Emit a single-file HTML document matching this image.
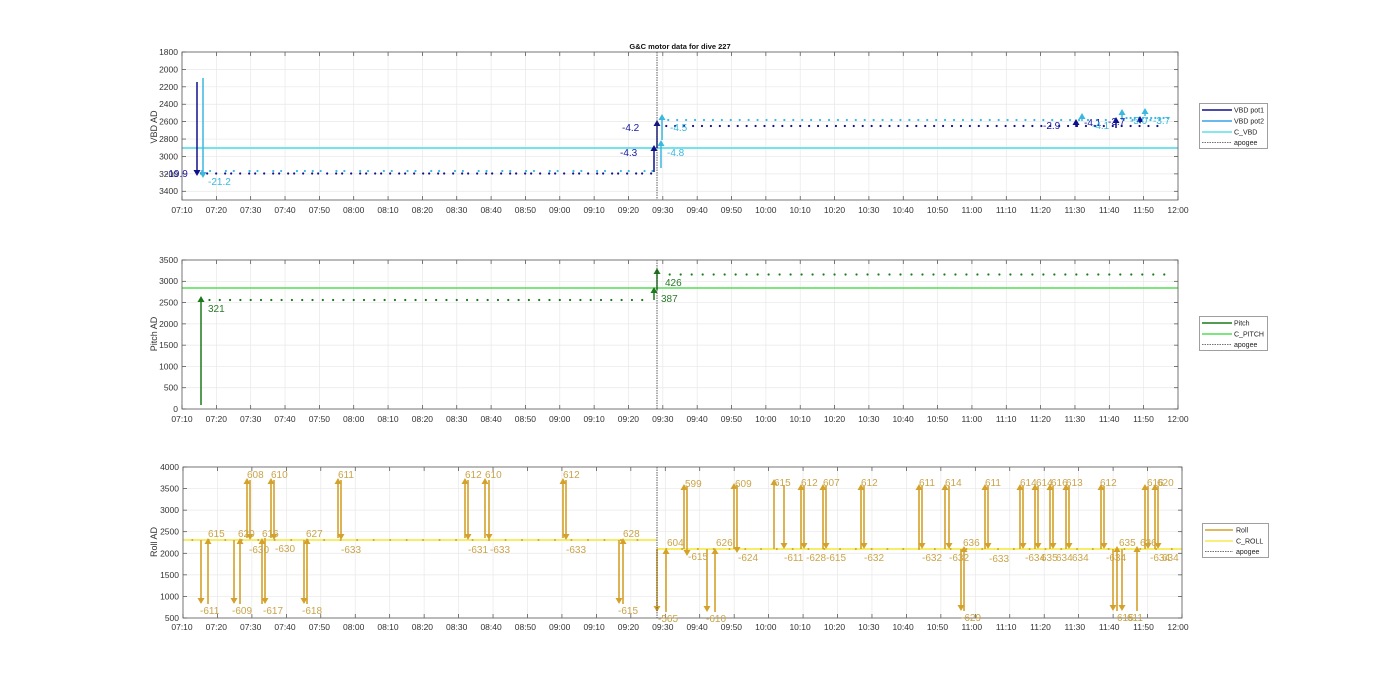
<!DOCTYPE html>
<html><head><meta charset="utf-8"><style>
html,body{margin:0;padding:0;background:#fff;width:1400px;height:693px;overflow:hidden}
svg{display:block;font-family:"Liberation Sans",sans-serif}
.tk{font-size:8.5px;fill:#333}
.lg{font-size:7px;fill:#222}
.vb{font-size:10px}
.rl{font-size:10px;fill:#C9A44A}
</style></head><body>
<svg id="s" width="1400" height="693" viewBox="0 0 1400 693" xmlns="http://www.w3.org/2000/svg">
<g id="dyn"></g>
<text x="680" y="49" text-anchor="middle" style="font-size:7.5px;font-weight:bold;fill:#111">G&amp;C motor data for dive 227</text>
<text transform="translate(157,127) rotate(-90)" text-anchor="middle" class="tk" style="font-size:9px">VBD AD</text>
<text transform="translate(157,334) rotate(-90)" text-anchor="middle" class="tk" style="font-size:9px">Pitch AD</text>
<text transform="translate(157,542) rotate(-90)" text-anchor="middle" class="tk" style="font-size:9px">Roll AD</text>
<g class="tk" text-anchor="end">
<text x="178" y="55">1800</text><text x="178" y="72.4">2000</text><text x="178" y="89.8">2200</text><text x="178" y="107.2">2400</text><text x="178" y="124.6">2600</text><text x="178" y="142">2800</text><text x="178" y="159.4">3000</text><text x="178" y="176.8">3200</text><text x="178" y="194.2">3400</text>
<text x="178" y="412">0</text><text x="178" y="390.7">500</text><text x="178" y="369.4">1000</text><text x="178" y="348.1">1500</text><text x="178" y="326.8">2000</text><text x="178" y="305.5">2500</text><text x="178" y="284.2">3000</text><text x="178" y="263">3500</text>
<text x="179" y="621">500</text><text x="179" y="599.4">1000</text><text x="179" y="577.9">1500</text><text x="179" y="556.3">2000</text><text x="179" y="534.7">2500</text><text x="179" y="513.2">3000</text><text x="179" y="491.6">3500</text><text x="179" y="470">4000</text>
</g>
<g class="tk" text-anchor="middle">
<g transform="translate(0,213)"><text x="182">07:10</text><text x="216.3">07:20</text><text x="250.7">07:30</text><text x="285">07:40</text><text x="319.4">07:50</text><text x="353.7">08:00</text><text x="388">08:10</text><text x="422.4">08:20</text><text x="456.7">08:30</text><text x="491.1">08:40</text><text x="525.4">08:50</text><text x="559.7">09:00</text><text x="594.1">09:10</text><text x="628.4">09:20</text><text x="662.8">09:30</text><text x="697.1">09:40</text><text x="731.4">09:50</text><text x="765.8">10:00</text><text x="800.1">10:10</text><text x="834.5">10:20</text><text x="868.8">10:30</text><text x="903.1">10:40</text><text x="937.5">10:50</text><text x="971.8">11:00</text><text x="1006.2">11:10</text><text x="1040.5">11:20</text><text x="1074.8">11:30</text><text x="1109.2">11:40</text><text x="1143.5">11:50</text><text x="1178">12:00</text></g>
<g transform="translate(0,422)"><text x="182">07:10</text><text x="216.3">07:20</text><text x="250.7">07:30</text><text x="285">07:40</text><text x="319.4">07:50</text><text x="353.7">08:00</text><text x="388">08:10</text><text x="422.4">08:20</text><text x="456.7">08:30</text><text x="491.1">08:40</text><text x="525.4">08:50</text><text x="559.7">09:00</text><text x="594.1">09:10</text><text x="628.4">09:20</text><text x="662.8">09:30</text><text x="697.1">09:40</text><text x="731.4">09:50</text><text x="765.8">10:00</text><text x="800.1">10:10</text><text x="834.5">10:20</text><text x="868.8">10:30</text><text x="903.1">10:40</text><text x="937.5">10:50</text><text x="971.8">11:00</text><text x="1006.2">11:10</text><text x="1040.5">11:20</text><text x="1074.8">11:30</text><text x="1109.2">11:40</text><text x="1143.5">11:50</text><text x="1178">12:00</text></g>
<g transform="translate(0,630)"><text x="182">07:10</text><text x="216.3">07:20</text><text x="250.7">07:30</text><text x="285">07:40</text><text x="319.4">07:50</text><text x="353.7">08:00</text><text x="388">08:10</text><text x="422.4">08:20</text><text x="456.7">08:30</text><text x="491.1">08:40</text><text x="525.4">08:50</text><text x="559.7">09:00</text><text x="594.1">09:10</text><text x="628.4">09:20</text><text x="662.8">09:30</text><text x="697.1">09:40</text><text x="731.4">09:50</text><text x="765.8">10:00</text><text x="800.1">10:10</text><text x="834.5">10:20</text><text x="868.8">10:30</text><text x="903.1">10:40</text><text x="937.5">10:50</text><text x="971.8">11:00</text><text x="1006.2">11:10</text><text x="1040.5">11:20</text><text x="1074.8">11:30</text><text x="1109.2">11:40</text><text x="1143.5">11:50</text><text x="1178">12:00</text></g>
</g>
<g class="vb">
<text x="165" y="177" fill="#1a1aa0">-19.9</text>
<text x="208" y="185" fill="#3ab8e0">-21.2</text>
<text x="622" y="131" fill="#1a1aa0">-4.2</text>
<text x="620" y="156" fill="#1a1aa0">-4.3</text>
<text x="670" y="131" fill="#3ab8e0">-4.5</text>
<text x="667" y="156" fill="#3ab8e0">-4.8</text>
<text x="1043" y="129" fill="#1a1aa0">-2.9</text>
<text x="1084" y="126" fill="#1a1aa0">-4.1</text>
<text x="1092" y="129" fill="#3ab8e0">-4.1</text>
<text x="1108" y="125" fill="#1a1aa0">-3.7</text>
<text x="1130" y="124" fill="#3ab8e0">-5.0</text>
<text x="1153" y="124" fill="#3ab8e0">-3.7</text>
</g>
<g style="font-size:10px;fill:#2a7a2a">
<text x="208" y="312">321</text><text x="665" y="286">426</text><text x="661" y="302">387</text>
</g>
<g class="rl">
<text x="200" y="614">-611</text><text x="208" y="537">615</text><text x="232" y="614">-609</text><text x="238" y="537">620</text><text x="247" y="478">608</text><text x="249" y="553">-630</text>
<text x="262" y="537">616</text><text x="263" y="614">-617</text><text x="271" y="478">610</text><text x="275" y="552">-630</text><text x="302" y="614">-618</text><text x="306" y="537">627</text>
<text x="338" y="478">611</text><text x="341" y="553">-633</text><text x="465" y="478">612</text><text x="485" y="478">610</text><text x="468" y="553">-631</text><text x="490" y="553">-633</text>
<text x="563" y="478">612</text><text x="566" y="553">-633</text><text x="618" y="614">-615</text><text x="623" y="537">628</text><text x="658" y="622">-565</text><text x="667" y="546">604</text>
<text x="685" y="487">599</text><text x="688" y="560">-615</text><text x="706" y="622">-610</text><text x="716" y="546">626</text><text x="735" y="487">609</text><text x="738" y="561">-624</text>
<text x="774" y="486">615</text><text x="784" y="561">-611</text><text x="801" y="486">612</text><text x="806" y="561">-628</text><text x="823" y="486">607</text><text x="826" y="561">-615</text>
<text x="861" y="486">612</text><text x="864" y="561">-632</text><text x="919" y="486">611</text><text x="922" y="561">-632</text><text x="945" y="486">614</text><text x="949" y="561">-632</text>
<text x="963" y="546">636</text><text x="961" y="621">-629</text><text x="985" y="486">611</text><text x="989" y="562">-633</text>
<text x="1020" y="486">614</text><text x="1036" y="486">614</text><text x="1051" y="486">616</text><text x="1066" y="486">613</text><text x="1025" y="561">-634</text><text x="1041" y="561">635</text><text x="1056" y="561">634</text><text x="1072" y="561">634</text>
<text x="1100" y="486">612</text><text x="1106" y="561">-634</text><text x="1119" y="546">635</text><text x="1140" y="546">636</text><text x="1117" y="621">615</text><text x="1127" y="621">611</text>
<text x="1147" y="486">616</text><text x="1157" y="486">620</text><text x="1150" y="561">-634</text><text x="1162" y="561">634</text>
</g>
<g>
<rect x="1199.5" y="103.5" width="68" height="45" fill="#fff" stroke="#888" stroke-width="0.8"/>
<line x1="1202" y1="110" x2="1232" y2="110" stroke="#10108c" stroke-width="1.5"/><text class="lg" x="1234" y="112.5">VBD pot1</text>
<line x1="1202" y1="121" x2="1232" y2="121" stroke="#3aa0e8" stroke-width="1.5"/><text class="lg" x="1234" y="123.5">VBD pot2</text>
<line x1="1202" y1="132" x2="1232" y2="132" stroke="#5ee0ea" stroke-width="1.5"/><text class="lg" x="1234" y="134.5">C_VBD</text>
<line x1="1202" y1="142.5" x2="1232" y2="142.5" stroke="#444" stroke-width="0.8" stroke-dasharray="1.5,1"/><text class="lg" x="1234" y="145">apogee</text>
<rect x="1199.5" y="316.5" width="68" height="34" fill="#fff" stroke="#888" stroke-width="0.8"/>
<line x1="1202" y1="323" x2="1232" y2="323" stroke="#1a7a1a" stroke-width="1.5"/><text class="lg" x="1234" y="325.5">Pitch</text>
<line x1="1202" y1="334" x2="1232" y2="334" stroke="#55dd55" stroke-width="1.5"/><text class="lg" x="1234" y="336.5">C_PITCH</text>
<line x1="1202" y1="344.5" x2="1232" y2="344.5" stroke="#444" stroke-width="0.8" stroke-dasharray="1.5,1"/><text class="lg" x="1234" y="347">apogee</text>
<rect x="1202.5" y="523.5" width="66" height="34" fill="#fff" stroke="#888" stroke-width="0.8"/>
<line x1="1205" y1="530" x2="1233" y2="530" stroke="#D4A22C" stroke-width="1.5"/><text class="lg" x="1236" y="532.5">Roll</text>
<line x1="1205" y1="541" x2="1233" y2="541" stroke="#F5EC50" stroke-width="1.5"/><text class="lg" x="1236" y="543.5">C_ROLL</text>
<line x1="1205" y1="551.5" x2="1233" y2="551.5" stroke="#444" stroke-width="0.8" stroke-dasharray="1.5,1"/><text class="lg" x="1236" y="554">apogee</text>
</g>
</svg>
<script>
(function(){
var NS="http://www.w3.org/2000/svg",g=document.getElementById('dyn');
function el(t,a){var e=document.createElementNS(NS,t);for(var k in a)e.setAttribute(k,a[k]);g.appendChild(e);return e;}
function X(m){return 182+m*3.4345;}
var panels=[[52,200,182,1178],[260,409,182,1178],[467,618,183,1182]];
var yt=[[52,200,17.41],[260,409,21.29],[467,618,21.57]];
panels.forEach(function(p,i){
  el('rect',{x:p[2],y:p[0],width:p[3]-p[2],height:p[1]-p[0],fill:'#fff'});
  for(var k=0;k<=29;k++){var x=p[2]+k*(p[3]-p[2])/29;
    el('line',{x1:x,y1:p[0],x2:x,y2:p[1],stroke:'#e8e8e8','stroke-width':0.7});
    el('line',{x1:x,y1:p[1],x2:x,y2:p[1]-4,stroke:'#444','stroke-width':0.7});
    el('line',{x1:x,y1:p[0],x2:x,y2:p[0]+4,stroke:'#444','stroke-width':0.7});}
  var st=yt[i][2];for(var y=p[0];y<=p[1]+0.5;y+=st){
    el('line',{x1:p[2],y1:y,x2:p[3],y2:y,stroke:'#e8e8e8','stroke-width':0.7});
    el('line',{x1:p[2],y1:y,x2:p[2]+4,y2:y,stroke:'#444','stroke-width':0.7});
    el('line',{x1:p[3],y1:y,x2:p[3]-4,y2:y,stroke:'#444','stroke-width':0.7});}
});
function arrow(x,y1,y2,c,w){el('line',{x1:x,y1:y1,x2:x,y2:y2+(y2>y1?-5:5),stroke:c,'stroke-width':w||1.5});
  var d=y2>y1?-6:6;el('polygon',{points:(x-3.5)+','+(y2+d)+' '+(x+3.5)+','+(y2+d)+' '+x+','+y2,fill:c});}
function dot(x,y,c,r){el('circle',{cx:x,cy:y,r:r||1.1,fill:c});}
var DK='#10108c',LB='#3ab8e0',CY='#5ee0ea',GR='#1a7a1a',LG='#55dd55',RO='#D4A22C',YE='#F5EC50';
el('line',{x1:182,y1:148,x2:1178,y2:148,stroke:CY,'stroke-width':1.8});
var t;for(t=5;t<138;t+=2.3){var x=X(t);dot(x+((t*7)%3),173.5,DK);if(((t*10)|0)%3)dot(x+3,171,LB);}
for(t=141;t<285;t+=2.6){var x=X(t);dot(x,126,DK);dot(x+2,120,LB);}
for(t=275;t<288;t+=1.2){dot(X(t),118,LB);}
arrow(197,82,176,DK);arrow(203,78,178,LB);
arrow(654,172,145,DK);arrow(657,148,120,DK);arrow(661,168,140,LB);arrow(662,140,114,LB);
arrow(1076,127,119,DK);arrow(1082,121,113,LB);arrow(1116,128,117,DK);arrow(1122,120,109,LB);arrow(1140,123,116,DK);arrow(1145,116,108,LB);
el('line',{x1:182,y1:288,x2:1178,y2:288,stroke:LG,'stroke-width':1.5});
for(t=8;t<137;t+=3){dot(X(t),300,GR);}
for(t=142;t<288;t+=3.2){dot(X(t),274.5,GR);}
arrow(201,405,296,GR);arrow(654,300,287,GR);arrow(657,290,268,GR);
el('line',{x1:183,y1:540,x2:657,y2:540,stroke:YE,'stroke-width':1.8});
el('line',{x1:657,y1:549,x2:1182,y2:549,stroke:YE,'stroke-width':1.8});
for(t=3;t<135;t+=4.8){dot(X(t),540,RO,1);}for(t=141;t<290;t+=4.6){dot(X(t),549,RO,1);}
var P=[[201,540,604],[208,604,538],[234,540,604],[240,604,538],[247,538,478],[250,480,540],[262,604,538],[265,538,604],[271,538,478],[274,480,540],[304,540,604],[307,604,538],[338,538,478],[341,480,540],[465,538,478],[468,480,540],[485,538,478],[489,480,540],[563,538,478],[566,480,540],[619,540,604],[623,604,538],[657,549,612],[666,612,548],[684,549,484],[687,486,556],[707,549,612],[715,612,548],[734,549,483],[737,485,553],[774,549,479],[784,485,549],[801,549,484],[804,486,549],[823,549,484],[826,486,549],[861,549,484],[864,486,549],[919,549,484],[922,486,549],[945,549,484],[949,486,549],[961,549,611],[964,611,546],[985,549,484],[988,486,549],[1020,549,484],[1023,486,549],[1035,549,484],[1038,486,549],[1050,549,484],[1053,486,549],[1066,549,484],[1069,486,549],[1101,549,484],[1104,486,549],[1113,549,611],[1117,611,546],[1122,549,611],[1137,611,546],[1145,549,484],[1148,486,549],[1155,549,484],[1158,486,549]];
P.forEach(function(a){arrow(a[0],a[1],a[2],RO,1.6);});
[[52,200],[260,409],[467,618]].forEach(function(p){el('line',{x1:657,y1:p[0],x2:657,y2:p[1],stroke:'#333','stroke-width':0.8,'stroke-dasharray':'1.5,1'});});
panels.forEach(function(p){el('rect',{x:p[2],y:p[0],width:p[3]-p[2],height:p[1]-p[0],fill:'none',stroke:'#555','stroke-width':0.8});});
})();
</script>
</body></html>
